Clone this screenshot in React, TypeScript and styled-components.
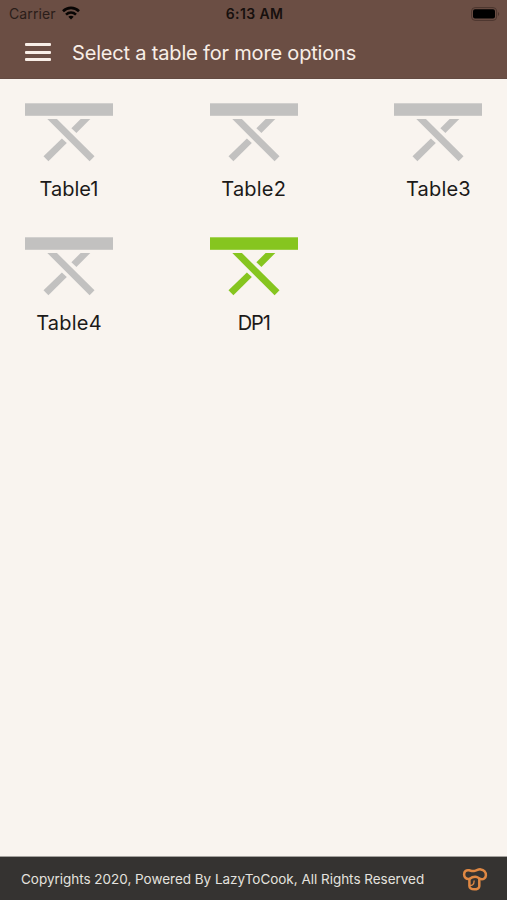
import React from "react";
import styled, { createGlobalStyle } from "styled-components";

const GlobalStyle = createGlobalStyle`
  * { box-sizing: border-box; }
  body { margin: 0; background: #f9f4ef; font-family: Inter, "Liberation Sans", sans-serif; }
  svg { flex: none; display: block; }
`;

const Screen = styled.div`
  display: flex;
  flex-direction: column;
  width: 100%;
  height: 100vh;
  overflow: hidden;
  background: #f9f4ef;
`;

const Header = styled.header`
  height: 79px;
  flex: none;
  background: #6b4e44;
  border-bottom: 1px solid #634a42;
`;

const StatusBar = styled.div`
  display: grid;
  grid-template-columns: 1fr auto 1fr;
  align-items: center;
  height: 27px;
  padding: 0 7px 0 9px;
  color: #17100e;
  font-size: 14px;
  line-height: 27px;
`;

const Carrier = styled.div`
  display: flex;
  align-items: center;
  gap: 6px;
  letter-spacing: 0.12px;
  color: #2a1d19;

  svg { margin-top: -2px; }
`;

const Clock = styled.div`
  font-weight: 600;
  font-size: 14px;
  line-height: 26px;
  letter-spacing: 0.4px;
`;

const BatterySlot = styled.div`
  display: flex;
  justify-content: flex-end;
`;

const TitleBar = styled.div`
  display: flex;
  align-items: center;
  height: 52px;
  padding-left: 25px;
  gap: 21px;
`;

const MenuButton = styled.button`
  display: flex;
  flex-direction: column;
  gap: 4.5px;
  width: 26px;
  margin-top: -2px;
  padding: 0;
  border: 0;
  background: none;
  cursor: pointer;
`;

const MenuLine = styled.span`
  height: 3px;
  background: #f8eee7;
  border-radius: 1px;
`;

const Title = styled.h1`
  margin: 0;
  color: #f8eee7;
  font-size: 20px;
  font-weight: 400;
  line-height: 28px;
  letter-spacing: -0.18px;
  white-space: nowrap;
`;

const Tables = styled.main`
  flex: 1;
  display: grid;
  grid-template-columns: repeat(3, 88px);
  grid-auto-rows: 100px;
  justify-content: space-between;
  align-content: start;
  row-gap: 34px;
  padding: 24px 24.6px 0 25px;
`;

const TableItem = styled.div`
  display: flex;
  flex-direction: column;
  align-items: center;
`;

const TableLabel = styled.span<{ $spacing?: number }>`
  margin-top: 13px;
  font-size: 20px;
  line-height: 28px;
  letter-spacing: ${(p) => p.$spacing ?? 0}px;
  color: #1c1a19;
  white-space: nowrap;
`;

const Footer = styled.footer`
  display: flex;
  align-items: center;
  justify-content: space-between;
  flex: none;
  height: 44px;
  padding: 0 19px 0 21px;
  background: #353331;
  border-top: 1px solid #a5a29e;
`;

const Copyright = styled.span`
  font-size: 13.5px;
  letter-spacing: -0.02px;
  color: #e4e2df;
  white-space: nowrap;
`;

const WifiIcon = () => (
  <svg width="18" height="14" viewBox="0 0 18 14" fill="none" stroke="#080504" strokeWidth="2.6">
    <path d="M1 5.2C5.6.8 12.4.8 17 5.2" />
    <path d="M4 8.6c2.9-2.6 7.1-2.6 10 0" />
    <path d="M6.3 10.8c1.5-1.3 3.9-1.3 5.4 0L9 13.6Z" fill="#080504" stroke="none" />
  </svg>
);

const BatteryIcon = () => (
  <svg width="29" height="14" viewBox="0 0 29 14">
    <rect x="0.6" y="0.6" width="25" height="12.8" rx="3.5" fill="none" stroke="#4b352e" />
    <rect x="2" y="2.2" width="22" height="9.4" rx="2" fill="#000" />
    <path d="M27 5v4c1.6-.7 1.6-3.3 0-4Z" fill="#4b352e" />
  </svg>
);

const TableIcon = ({ color }: { color: string }) => (
  <svg width="88" height="59" viewBox="0 0 88 59" fill={color}>
    <rect y="0.3" width="88" height="12.5" />
    <path d="M22.3 16h9.6l37.6 37.2-4.9 5.1Z" />
    <path d="M55.6 16h9.7L51.4 30l-5-4.8Z" />
    <path d="M36.9 35.4l4.9 4.7L23.4 58.3l-4.9-5.1Z" />
  </svg>
);

const MushroomIcon = () => (
  <svg width="26" height="24" viewBox="0 0 26 24" fill="none" stroke="#df8843" strokeWidth="2.5" strokeLinecap="round" strokeLinejoin="round">
    <path d="M7.4 12C4.4 12.5 2.1 10.3 2.1 7.4c0-3 2.1-4.8 5-4.1 2 .5 3.7 1.1 5.6.6 2.3-.6 3.6-1.8 6-1.5 3.2.4 5.4 2.8 5.2 5.9-.2 2.9-2.5 4.2-5.1 3.8-1.8-.3-2.5-1.8-4.3-2.2-2.7-.5-4.8.3-7.1 2.1Z" />
    <path d="M7.4 12v7c.2 4.4 9.9 4.4 9.9.2v-7" />
    <path d="M7.6 18.4c2 .2 4.6-.6 4.5-4.4" strokeWidth="1.3" />
  </svg>
);

const tables = [
  { name: "Table1", color: "#c2c1c0", spacing: 0 },
  { name: "Table2", color: "#c2c1c0", spacing: 0.2 },
  { name: "Table3", color: "#c2c1c0", spacing: 0.2 },
  { name: "Table4", color: "#c2c1c0", spacing: 0.2 },
  { name: "DP1", color: "#86c51f", spacing: -1.1 },
];

export default function App() {
  return (
    <Screen>
      <GlobalStyle />
      <Header>
        <StatusBar>
          <Carrier>Carrier <WifiIcon /></Carrier>
          <Clock>6:13 AM</Clock>
          <BatterySlot><BatteryIcon /></BatterySlot>
        </StatusBar>
        <TitleBar>
          <MenuButton aria-label="Menu"><MenuLine /><MenuLine /><MenuLine /></MenuButton>
          <Title>Select a table for more options</Title>
        </TitleBar>
      </Header>
      <Tables>
        {tables.map((t) => (
          <TableItem key={t.name}>
            <TableIcon color={t.color} />
            <TableLabel $spacing={t.spacing}>{t.name}</TableLabel>
          </TableItem>
        ))}
      </Tables>
      <Footer>
        <Copyright>Copyrights 2020, Powered By LazyToCook, All Rights Reserved</Copyright>
        <MushroomIcon />
      </Footer>
    </Screen>
  );
}
